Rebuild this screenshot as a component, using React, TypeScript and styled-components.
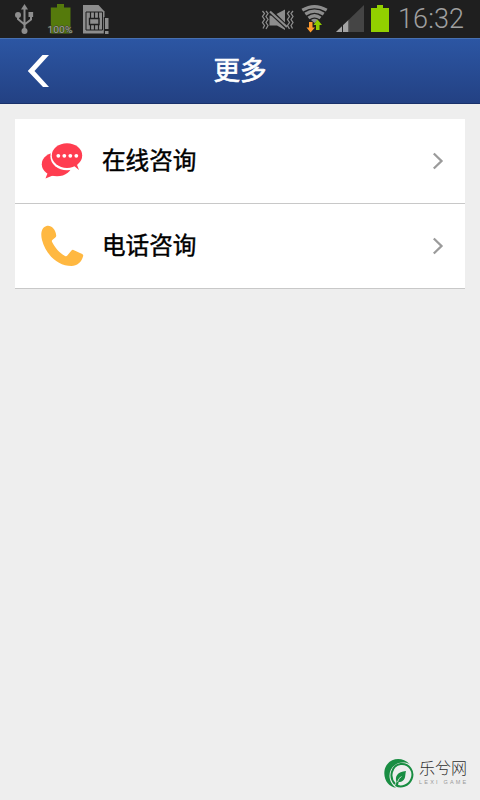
import React from "react";
import styled, { createGlobalStyle } from "styled-components";

const GlobalStyle = createGlobalStyle`
  * { box-sizing: border-box; }
  body { margin: 0; background: #eeeeee; }
`;

const Screen = styled.div`
  width: 480px;
  height: 800px;
  display: flex;
  flex-direction: column;
  overflow: hidden;
  background: #eeeeee;
  font-family: "Noto Sans CJK SC", sans-serif;
`;

const StatusBar = styled.div`
  height: 38px;
  flex: none;
  display: flex;
  justify-content: space-between;
  padding: 0 15px 0 14px;
  background: #1f1f1f;
`;

const StatusGroup = styled.div`
  display: flex;
  align-items: flex-start;
`;

const StatusIcon = styled.svg<{ $gap?: number }>`
  display: block;
  flex: none;
  margin-right: ${(p) => p.$gap ?? 0}px;
`;

const Clock = styled.span`
  width: 67px;
  font-family: Roboto, sans-serif;
  font-weight: 300;
  font-size: 27px;
  line-height: 38px;
  letter-spacing: 0.1px;
  color: #a0a0a0;
  white-space: nowrap;
`;

const Header = styled.header`
  height: 66px;
  flex: none;
  display: grid;
  grid-template-columns: 80px 1fr 80px;
  align-items: center;
  border-top: 1px solid #4770b1;
  border-bottom: 1px solid #19316a;
  background: linear-gradient(#2c56a3, #234183);
`;

const BackButton = styled.button`
  width: 80px;
  height: 64px;
  padding: 0 0 0 27px;
  border: 0;
  background: none;
  display: flex;
  align-items: center;
`;

const Title = styled.h1`
  margin: 0;
  padding-bottom: 4px;
  text-align: center;
  font-size: 26.5px;
  line-height: 40px;
  font-weight: 400;
  color: #fff;
  -webkit-text-stroke: 0.7px #fff;
`;

const Content = styled.main`
  flex: 1;
  padding: 15px 15px 0;
`;

const List = styled.div`
  background: #fff;
`;

const Row = styled.div`
  height: 85px;
  display: flex;
  align-items: center;
  padding: 0 21px 0 24px;
  border-bottom: 1px solid #c8c8c8;
`;

const RowLabel = styled.span`
  flex: 1;
  margin-left: 17px;
  padding-bottom: 4px;
  font-size: 23.6px;
  line-height: 34px;
  font-weight: 400;
  color: #000;
  -webkit-text-stroke: 0.45px #000;
`;

const Footer = styled.footer`
  flex: none;
  height: 45px;
  display: flex;
  justify-content: flex-end;
  padding-right: 10px;
`;

const Brand = styled.div`
  width: 87px;
  display: flex;
  gap: 5px;
`;

const BrandText = styled.div`
  display: flex;
  flex-direction: column;
  padding-top: 2px;
  white-space: nowrap;
`;

const BrandName = styled.span`
  font-size: 16px;
  line-height: 20px;
  font-weight: 300;
  color: #303030;
`;

const BrandSub = styled.span`
  font-family: "Liberation Sans", sans-serif;
  font-size: 5.5px;
  line-height: 8px;
  margin-top: 1px;
  letter-spacing: 2.2px;
  color: #999;
`;

const UsbIcon = () => (
  <StatusIcon $gap={12} width="21" height="38" viewBox="14 0 21 38" fill="#8d8d8d">
    <path d="M24.5 4l3.500 5.500h-7z" />
    <circle cx="24.5" cy="31" r="3" />
    <circle cx="18" cy="15" r="3" />
    <path d="M28.5 12h4.6v5h-4.6z" />
    <path d="M24.5 8v22M18 15v4l6.5 5.5M31 15v4.5l-6.5 5" fill="none" stroke="#8d8d8d" strokeWidth="2" />
  </StatusIcon>
);

const BatteryFull = () => (
  <StatusIcon $gap={9} width="26" height="38" viewBox="47 0 26 38">
    <path d="M57 4h7v3.5h6.500V33.500H50.800V7.500H57z" fill="#557a0c" />
    <text
      x="60"
      y="32.500"
      textAnchor="middle"
      fontFamily="Roboto, sans-serif"
      fontSize="9.500"
      fontWeight="400"
      fill="#a4a89c"
      stroke="#3a3d30"
      strokeWidth="1"
      paintOrder="stroke"
      textLength="25"
      lengthAdjust="spacingAndGlyphs"
    >
      100%
    </text>
  </StatusIcon>
);

const SimIcon = () => (
  <StatusIcon width="28" height="38" viewBox="82 0 28 38">
    <path d="M83 5h15.500l6 6.500v22H83z" fill="#8d8d8d" />
    <path d="M86 12h16.500v18H86z" fill="none" stroke="#1f1f1f" strokeWidth="1" />
    <path d="M90.500 12v6M94.500 12v6M98.500 12v6M90.500 25v5M94.500 25v5M98.500 25v5" stroke="#1f1f1f" strokeWidth="1.200" />
    <path d="M89.500 18.500h9.500v6h-9.500z" fill="none" stroke="#1f1f1f" strokeWidth="1.400" />
    <path d="M103.800 17h5.200v18h-5.200z" fill="#1f1f1f" />
    <path d="M105 18h3.500v11H105zM105 31h3.500v3H105z" fill="#8d8d8d" />
  </StatusIcon>
);

const MuteIcon = () => (
  <StatusIcon $gap={6} width="34" height="38" viewBox="262 0 34 38">
    <path d="M270.500 15.500h4l11.500 10.500v4l-8-4.500h-7.500z" fill="#8d8d8d" />
    <path d="M277.500 14l8.500-4.500v13z" fill="#8d8d8d" />
    <path d="M271 12L287.500 27.500" stroke="#1f1f1f" strokeWidth="3.200" />
    <path d="M271 11.500L288 27" stroke="#8d8d8d" strokeWidth="2.200" />
    <path
      d="M263.500 11l2 2.500-2 3 2 3-2 3 2 3-1.500 3M267 11l2 2.500-2 3 2 3-2 3 2 3-2 3.500M290.500 11l-2 2.500 2 3-2 3 2 3-2 3 2 3.500M294 11l-2 2.500 2 3-2 3 2 3-2 3 1.500 3"
      stroke="#8d8d8d"
      strokeWidth="1.300"
      fill="none"
    />
  </StatusIcon>
);

const WifiIcon = () => (
  <StatusIcon $gap={7} width="28" height="38" viewBox="301 0 28 38">
    <g fill="none" stroke="#8d8d8d" strokeWidth="3.200">
      <path d="M302.300 10.200Q314.500 3 326.700 10.200" />
      <path d="M305.300 14.200Q314.500 8 323.700 14.200" />
      <path d="M308.500 18Q314.500 13.500 320.500 18" />
    </g>
    <path d="M311 20Q314.500 17.500 318 20L314.500 23z" fill="#8d8d8d" />
    <path d="M309 22h3.500v5.500h2.500L310.500 32.500 306.500 27.500h2.500z" fill="#ff9a2e" />
    <path d="M316 30v-5h-2.500l4-5.500L322 25h-2.500v5z" fill="#8fcb00" />
  </StatusIcon>
);

const SignalIcon = () => (
  <StatusIcon $gap={6} width="29" height="38" viewBox="336 0 29 38">
    <path d="M336 32L364 5v27z" fill="#454545" />
    <path d="M336 32l13.500-13v13z" fill="#a3a3a3" />
    <path d="M342.500 24v8M349 19v13" stroke="#1f1f1f" strokeWidth="1" />
  </StatusIcon>
);

const BatteryIcon = () => (
  <StatusIcon $gap={8} width="19" height="38" viewBox="371 0 19 38">
    <path d="M377 5h6v3h6v24h-18V8h6z" fill="#92d000" />
  </StatusIcon>
);

const BackArrow = () => (
  <svg width="23" height="34" viewBox="0 0 23 34">
    <path d="M15.500 1H22L7.500 17 22 33h-6L.8 17z" fill="#fff" />
  </svg>
);

const ChatIcon = () => (
  <svg width="46" height="46" viewBox="0 0 46 46">
    <g fill="#ff3d50">
      <ellipse cx="18" cy="26.300" rx="15.200" ry="12" />
      <path d="M9 34l-2.500 6.500L15 37z" />
      <ellipse cx="28" cy="18.300" rx="16.600" ry="14" fill="#fff" />
      <ellipse cx="28" cy="17.600" rx="15.200" ry="12.400" />
      <path d="M31 28.800l3.500-1.200 5.500 4.400-2.500-6.500-4 1.500z" />
    </g>
    <g fill="#fff">
      <circle cx="19.300" cy="17.800" r="1.900" />
      <circle cx="25.300" cy="17.800" r="1.900" />
      <circle cx="31.300" cy="17.800" r="1.900" />
      <circle cx="37.300" cy="17.800" r="1.900" />
    </g>
  </svg>
);

const PhoneIcon = () => (
  <svg width="46" height="46" viewBox="0 0 46 46">
    <path
      d="M7.500 3C12 1.800 16.500 6 17.200 12.300c.1.900-.2 1.600-.9 2.200l-3 2.500c-.6.600-.6 1.200-.2 2C15.800 24.500 20.500 30 26 33c.9.500 1.700.4 2.300-.4l4.400-5.300c.5-.6 1-.7 1.700-.4l8.800 4c1 .5 1.200 1.200.9 2.300C42.700 39 38 43 32.500 43 19 43 7 32 3 17 1 9 3.500 4 7.500 3z"
      fill="#ffb841"
    />
  </svg>
);

const Chevron = () => (
  <svg width="12" height="18" viewBox="0 0 12 18">
    <path d="M1.800 1.500L9.500 9l-7.700 7.500" fill="none" stroke="#9b9b9b" strokeWidth="2.300" />
  </svg>
);

const BrandMark = () => (
  <svg width="31" height="38" viewBox="0 0 31 38">
    <path d="M27 9.500C19 .500 5 3 1.800 14-.5 24 5.500 32 13 32.700 4.500 27 4.500 15 12 10c5-3.300 11-3 15-.5z" fill="#198d42" />
    <path d="M12 29C5.500 22 8.500 10.500 17.500 9c9-1 14 8 11 15-3 7-10.500 9-16 6" fill="none" stroke="#198d42" strokeWidth="2" />
    <path d="M13.500 27c-2-6 1-10 9.500-11-.5 2-.5 3-.8 5-.5 4-3 6-6.500 6L14.800 31l-2.300-.7z" fill="#198d42" />
    <path d="M14.500 27q1-4 4-5.500" fill="none" stroke="#eee" strokeWidth=".8" />
  </svg>
);

const rows = [
  { label: "在线咨询", Icon: ChatIcon },
  { label: "电话咨询", Icon: PhoneIcon },
];

export default function App() {
  return (
    <Screen>
      <GlobalStyle />
      <StatusBar>
        <StatusGroup>
          <UsbIcon />
          <BatteryFull />
          <SimIcon />
        </StatusGroup>
        <StatusGroup>
          <MuteIcon />
          <WifiIcon />
          <SignalIcon />
          <BatteryIcon />
          <Clock>16:32</Clock>
        </StatusGroup>
      </StatusBar>
      <Header>
        <BackButton aria-label="返回">
          <BackArrow />
        </BackButton>
        <Title>更多</Title>
      </Header>
      <Content>
        <List>
          {rows.map(({ label, Icon }) => (
            <Row key={label}>
              <Icon />
              <RowLabel>{label}</RowLabel>
              <Chevron />
            </Row>
          ))}
        </List>
      </Content>
      <Footer>
        <Brand>
          <BrandMark />
          <BrandText>
            <BrandName>乐兮网</BrandName>
            <BrandSub>LEXI GAME</BrandSub>
          </BrandText>
        </Brand>
      </Footer>
    </Screen>
  );
}
